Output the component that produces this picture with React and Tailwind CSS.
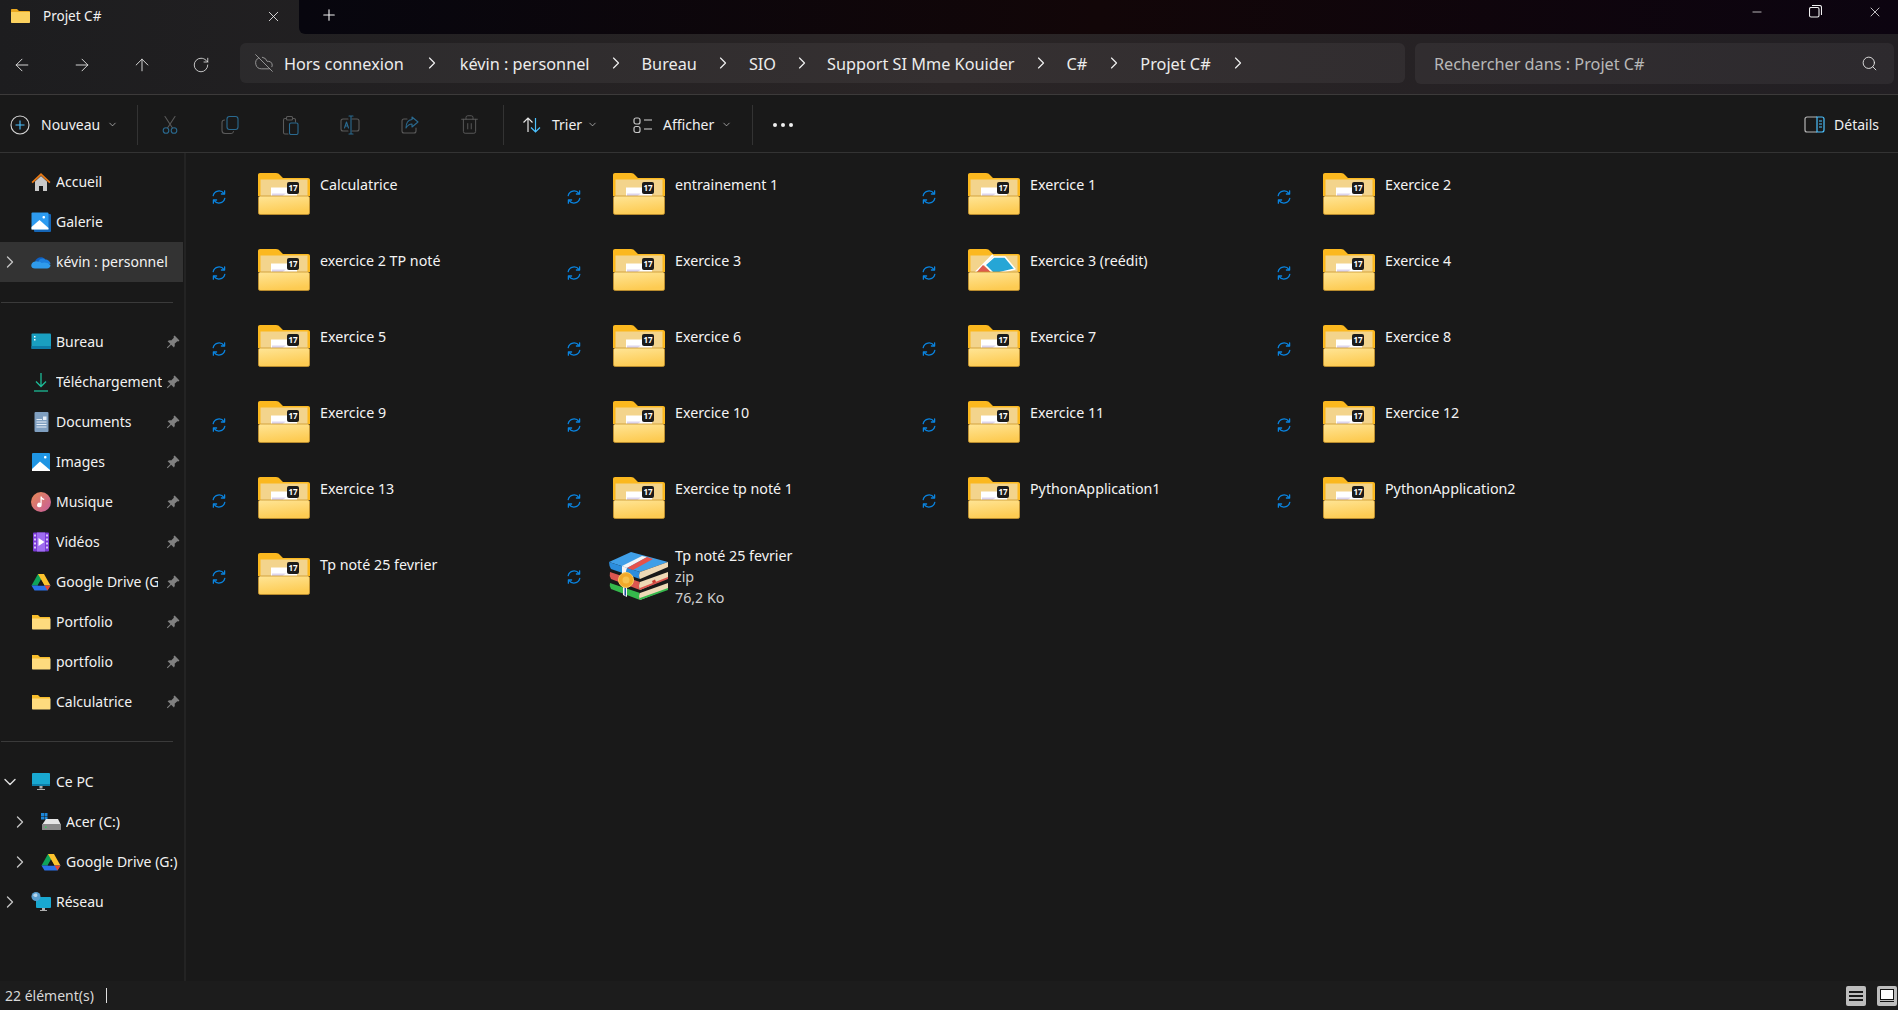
import React from "react";
import { ChevronRight, ChevronDown, ArrowLeft, ArrowRight, ArrowUp, RotateCw, CloudOff, Search, X, Plus, Minus, Trash2 } from "lucide-react";

const Font = '"Noto Sans", sans-serif';

function Sync() {
  return (
    <svg width="16" height="16" viewBox="0 0 16 16" fill="none" stroke="#0a84e0" strokeWidth="1.300" strokeLinecap="round" strokeLinejoin="round">
      <path d="M2.200 6.600A6 6 0 0 1 13 4.600" />
      <path d="M13.600 1.800v3.200h-3.200" />
      <path d="M13.800 9.400A6 6 0 0 1 3 11.400" />
      <path d="M2.400 14.200V11h3.200" />
    </svg>
  );
}

function FolderBase({ children, id }) {
  return (
    <svg width="52" height="42" viewBox="0 0 52 42" className="shrink-0">
      <defs>
        <linearGradient id={id} x1="0" y1="0" x2="0.300" y2="1">
          <stop offset="0" stopColor="#ffe596" />
          <stop offset="1" stopColor="#fdcb52" />
        </linearGradient>
      </defs>
      <path d="M2 0h16c2 0 3 .7 4 2l3 3h25c1.200 0 2 .8 2 2v16H0V2c0-1.200.8-2 2-2z" fill="#fbb81f" />
      <rect x="2.500" y="6.500" width="47" height="18" fill="#f3d48c" />
      {children}
      <rect x="0.400" y="23" width="51.200" height="18.600" rx="2" fill={`url(#${id})`} stroke="#c9962c" strokeWidth="0.800" />
    </svg>
  );
}

function Folder17({ id }) {
  return (
    <FolderBase id={id}>
      <path d="M13 14.500H39V24H13z" fill="#fff" />
      <path d="M14 24h9l5-3.500H14z" fill="#ddd6ee" />
      <rect x="29" y="9" width="12" height="12" rx="2" fill="#1b1b1b" />
      <text x="35" y="18.200" textAnchor="middle" fontSize="8" fontWeight="700" fill="#fff" fontFamily={Font}>17</text>
    </FolderBase>
  );
}

function FolderApp({ id }) {
  return (
    <FolderBase id={id}>
      <path d="M6 25 L25 6" stroke="#fff" strokeWidth="2" fill="none" />
      <path d="M15 16 L7 25 H25z" fill="#de5a4e" />
      <path d="M17 16 L26 8 H37 L47 20 L26 25z" fill="#26a6d6" stroke="#fff" strokeWidth="1.500" strokeLinejoin="round" />
    </FolderBase>
  );
}

function Books() {
  return (
    <svg width="60" height="48" viewBox="0 0 60 48" className="shrink-0">
      <path d="M1 31 L31 41 Q29 44 31 48 L2 37 Q0 34 1 31z" fill="#35b84c" />
      <path d="M31 41 L59 31 V37 L31 48 Q29 44 31 41z" fill="#eed9b6" />
      <path d="M31 46 L59 36 V38 L31 48z" fill="#35b84c" />
      <path d="M1 20 L31 30 Q29 34 31 38 L2 27 Q0 24 1 20z" fill="#dc5650" />
      <path d="M31 30 L59 20 V26 L31 38 Q29 34 31 30z" fill="#eed9b6" />
      <path d="M31 36 L59 25 V27 L31 38z" fill="#dc5650" />
      <path d="M0 10 L22 0 L59 10 L31 20z" fill="#3f9fe8" />
      <path d="M0 10 L31 20 Q29 24 31 27 L2 17 Q0 14 0 10z" fill="#2b8ddd" />
      <path d="M31 20 L59 10 V15 L31 27 Q29 24 31 20z" fill="#eed9b6" />
      <path d="M13 14 L33 4 L38 5 L18 16z" fill="#f4f4f4" />
      <path d="M18 16 L38 5 L44 7 L24 18z" fill="#e5524a" />
      <path d="M13 14 L18 16 Q16 20 18 24 L13 22z" fill="#f4f4f4" />
      <path d="M14 33 L18 35 L18 45 L14 43z" fill="#f4f4f4" />
      <path d="M15.500 34 L17 35 L17 44 L15.500 43z" fill="#1d4e9e" />
      <circle cx="17" cy="28" r="7.500" fill="#f1a92b" stroke="#f8cb62" strokeWidth="1" />
      <circle cx="17" cy="28" r="3.500" fill="#f7c34f" />
      <path d="M43 29l3-1.500 1 2.500-3 1.500z" fill="#c83a30" />
    </svg>
  );
}

const Pin = () => (
  <svg width="14" height="14" viewBox="0 0 13 13" className="shrink-0" fill="#808080">
    <path d="M8 .5 12.500 5 11.500 6 10.500 5.700 8 8.200c.4 1.300.2 2.300-.6 3.300L4.800 9 1.500 12.300.8 11.600 4.100 8.300 1.500 5.700c1-.8 2-1 3.300-.6L7.300 2.600 7 1.500z" />
  </svg>
);

const FolderSmall = () => (
  <svg width="20" height="20" viewBox="0 0 20 20">
    <path d="M1 3h6l2 2h9.500c.5 0 .5.500.5.500V8H1z" fill="#f8bd2a" />
    <path d="M1 6.500h18.500v10.300c0 .4-.3.700-.7.700H1.700c-.4 0-.7-.3-.7-.7z" fill="#fedb7e" />
  </svg>
);

const Home = () => (
  <svg width="20" height="20" viewBox="0 0 20 20">
    <path d="M4 9.500 10 4l6 5.500V19H12v-5H8v5H4z" fill="#c9c9c9" />
    <path d="M.5 10 10 1l9.500 9-1.200 1.300L10 3.500 1.700 11.300z" fill="#e87a16" />
  </svg>
);
const Gallery = () => (
  <svg width="20" height="20" viewBox="0 0 20 20">
    <rect x="3" y="2" width="17" height="18" rx="1" fill="#1565b5" />
    <rect x="0.500" y="0.500" width="17" height="17" rx="1" fill="#2d9bf0" />
    <path d="M0.500 17.500V15L8.500 8l9 8v1.500z" fill="#fff" />
    <rect x="11.500" y="4" width="2.500" height="2.500" rx="1" fill="#fff" />
  </svg>
);
const OneDrive = () => (
  <svg width="20" height="20" viewBox="0 0 20 20">
    <path d="M4 9.500c1-4 7-6 10-2.500-2 0-5 .5-6 2.500z" fill="#0f5fc0" />
    <path d="M7.500 9c2-3 5-3 7-1.500 2 0 5 2 5 4.500H8z" fill="#1c7fde" />
    <path d="M4 9.500c-5 1-5 7 0 7h12c2 0 3.500-1.500 3.500-3.500-3-3-7-3-9-2-1-1-3-2-6.500-1.500z" fill="#2f9bec" />
  </svg>
);
const Desktop = () => (
  <svg width="20" height="20" viewBox="0 0 20 20">
    <rect x="0.500" y="1.500" width="19.500" height="15.500" rx="1" fill="#1a9fc0" />
    <path d="M0.500 14H20v3H.5z" fill="#0e7ca8" />
    <rect x="3" y="4" width="1.500" height="1.500" fill="#fff" />
    <rect x="3" y="7" width="1.500" height="1.500" fill="#fff" />
  </svg>
);
const Download = () => (
  <svg width="20" height="20" viewBox="0 0 20 20" fill="none" stroke="#1dbb97" strokeWidth="1.300">
    <path d="M10 1v13M5 9.500l5 5 5-5" />
    <path d="M3 19h14" />
  </svg>
);
const Docs = () => (
  <svg width="20" height="20" viewBox="0 0 20 20">
    <rect x="3.500" y="0" width="14" height="20" rx="1" fill="#7f9fc0" />
    <path d="M5.500 7H11v1H5.500zM5.500 9.500h10v1h-10zM5.500 12h10v1h-10zM5.500 14.500h10v1h-10zM12 4.500h3.500V8H12z" fill="#e6eef7" />
  </svg>
);
const Images = () => (
  <svg width="20" height="20" viewBox="0 0 20 20">
    <rect x="1" y="1" width="18" height="18" rx="1" fill="#1f95e3" />
    <path d="M1 19v-2L9 9.500l10 8.500v1z" fill="#fff" />
    <rect x="13" y="4" width="2.500" height="2.500" rx="1" fill="#fff" />
  </svg>
);
const Music = () => (
  <svg width="20" height="20" viewBox="0 0 20 20">
    <defs>
      <linearGradient id="mg" x1="0" y1="0" x2="1" y2="1">
        <stop offset="0" stopColor="#e88a55" />
        <stop offset="1" stopColor="#c55c9c" />
      </linearGradient>
    </defs>
    <circle cx="10" cy="10" r="10" fill="url(#mg)" />
    <path d="M9.500 4.500h1.200c.3 1.500 1.300 2 2.500 2.200v1.300c-1 0-1.800-.3-2.500-.8v5.800a2.300 2.300 0 1 1-1.200-2z" fill="#fff" />
  </svg>
);
const Video = () => (
  <svg width="20" height="20" viewBox="0 0 20 20">
    <rect x="2" y="0.500" width="16" height="19" rx="1" fill="#7a3bd6" />
    <path d="M6 0.500h8v19H6z" fill="#9f6cf0" />
    <path d="M7.500 6v8l6-4z" fill="#fff" />
    <path d="M3 2.500h2v2H3zM3 6.500h2v2H3zM3 10.500h2v2H3zM3 14.500h2v2H3zM15 2.500h2v2h-2zM15 6.500h2v2h-2zM15 10.500h2v2h-2zM15 14.500h2v2h-2z" fill="#d9c5fa" />
  </svg>
);
const GDrive = () => (
  <svg width="20" height="20" viewBox="0 0 20 20">
    <path d="M7 2h6l-6.500 11.500h-6z" fill="#0fa35a" />
    <path d="M7 2h6l6.500 11.500h-6z" fill="#fcc22d" />
    <path d="M0.500 13.500h19L16.500 18.500h-13z" fill="#2a70e8" />
    <path d="M13.500 13.500h6L16.500 18.500z" fill="#e8442f" />
    <path d="M6.800 13.500 10 8.200l3.200 5.300z" fill="#191919" />
  </svg>
);
const Monitor = () => (
  <svg width="20" height="20" viewBox="0 0 20 20">
    <rect x="1" y="1" width="18" height="13" rx="1" fill="#19a8d0" />
    <path d="M1 12h18v2H1z" fill="#0e7ea8" />
    <path d="M8.500 14h3v2.500h-3zM6 17h8v1H6z" fill="#b0b0b0" />
  </svg>
);
const Drive = () => (
  <svg width="20" height="20" viewBox="0 0 20 20">
    <path d="M0 1h3v3H0zM3.500 1h3v3h-3zM0 4.500h3v3H0zM3.500 4.500h3v3h-3z" fill="#1c86d8" />
    <path d="M3 10l2-3h12l3 6H1z" fill="#e6e6e6" />
    <rect x="1" y="12" width="19" height="6" rx=".5" fill="#8a8a8a" />
    <rect x="4" y="14.500" width="1.500" height="1.500" fill="#35d05a" />
  </svg>
);
const Network = () => (
  <svg width="20" height="20" viewBox="0 0 20 20">
    <rect x="5" y="5" width="15" height="11" rx="1" fill="#19a8d0" />
    <path d="M11 16h3v2h-3zM9 18h7v1H9z" fill="#b0b0b0" />
    <circle cx="5" cy="4.500" r="4.500" fill="#5a9fd0" />
    <path d="M2 3c1-1 3-2 4-1s0 3-1 3-2 0-3-2z" fill="#b9d6ec" />
  </svg>
);

function NavItem({ icon, label, pin, chevron, indent, selected, clip }) {
  return (
    <div className={`h-10 w-[183px] flex items-center shrink-0 text-[14px] text-[#f2f2f2] ${selected ? "bg-[#333333]" : ""}`}>
      <span className={`${indent ? "w-[41px] pl-[10px]" : "w-[31px]"} shrink-0 flex`}>
        {chevron === "right" && <ChevronRight size={20} strokeWidth={1.600} color="#c4c4c4" />}
        {chevron === "down" && <ChevronDown size={20} strokeWidth={1.700} color="#dcdcdc" />}
      </span>
      <span className="w-[25px] shrink-0 flex">{icon}</span>
      <span className={`${pin ? (clip ? "w-[102px] mr-[8px]" : "w-[106px] mr-[4px]") : ""} overflow-hidden whitespace-nowrap leading-none py-1`}>{label}</span>
      {pin && <Pin />}
    </div>
  );
}

const Sep = () => <span className="w-px h-10 bg-[#333333] shrink-0" />;

const Crumb = ({ label, w }) => (
  <span className="flex items-center">
    <span className="whitespace-nowrap pt-[2px]">{label}</span>
    <span className={`flex justify-center ${w}`}>
      <ChevronRight size={20} strokeWidth={1.400} color="#f0f0f0" />
    </span>
  </span>
);

function DimIcon({ children }) {
  return (
    <span className="w-[60px] flex justify-center shrink-0">
      <svg width="20" height="20" viewBox="0 0 20 20" fill="none" strokeWidth="1.100" strokeLinecap="round" strokeLinejoin="round">
        {children}
      </svg>
    </span>
  );
}

const G = "#5a5a5a";
const B = "#2a6a90";

const items = [
  ["Calculatrice"], ["entrainement 1"], ["Exercice 1"], ["Exercice 2"],
  ["exercice 2 TP noté"], ["Exercice 3"], ["Exercice 3 (reédit)", "app"], ["Exercice 4"],
  ["Exercice 5"], ["Exercice 6"], ["Exercice 7"], ["Exercice 8"],
  ["Exercice 9"], ["Exercice 10"], ["Exercice 11"], ["Exercice 12"],
  ["Exercice 13"], ["Exercice tp noté 1"], ["PythonApplication1"], ["PythonApplication2"],
  ["Tp noté 25 fevrier"], ["Tp noté 25 fevrier", "zip"],
];

function Item({ label, kind, id }) {
  return (
    <div className="h-[76px] flex items-start">
      <span className="w-[52px] h-[54px] flex items-center pl-[5px] shrink-0">
        <span className="flex"><Sync /></span>
      </span>
      {kind === "zip" ? (
        <span className="-ml-[4px] mr-[6px] flex mt-[2px]"><Books /></span>
      ) : (
        <span className="flex mt-[3px]">{kind === "app" ? <FolderApp id={id} /> : <Folder17 id={id} />}</span>
      )}
      {kind === "zip" ? (
        <div className="text-[14.250px] leading-[21px] text-[#f4f4f4] -mt-[5px] whitespace-nowrap">
          <div>{label}</div>
          <div className="text-[#cfcfcf]">zip</div>
          <div className="text-[#cfcfcf]">76,2 Ko</div>
        </div>
      ) : (
        <div className="ml-[10px] text-[14.250px] leading-[21px] text-[#f4f4f4] mt-[4px] whitespace-nowrap">{label}</div>
      )}
    </div>
  );
}

export default function App() {
  return (
    <div className="w-[1898px] h-[1010px] overflow-hidden bg-[#191919] flex flex-col" style={{ fontFamily: Font }}>
      <div className="bg-gradient-to-r from-[#1d1d1f] via-[#2a2526] to-[#221f23]">
        <div className="h-[34px] flex text-[#f2f2f2]">
          <div className="w-[299px] flex items-center shrink-0 pl-[11px] pb-[2px]">
            <svg width="19" height="14" viewBox="0 0 19 14" className="shrink-0">
              <path d="M0 1c0-.6.4-1 1-1h5l2 2h10c.6 0 1 .4 1 1v3H0z" fill="#eaa820" />
              <path d="M0 3h19v10c0 .6-.4 1-1 1H1c-.6 0-1-.4-1-1z" fill="#fbd15f" />
            </svg>
            <span className="ml-[13px] text-[13.500px] w-[222px]">Projet C#</span>
            <X size={17} strokeWidth={1.200} color="#f0f0f0" />
          </div>
          <div className="flex-1 flex items-center justify-between rounded-bl-[6px] bg-gradient-to-r from-[#07060e] via-[#120608] to-[#0c0410] pl-[21px] pb-[4px]">
            <Plus size={18} strokeWidth={1.500} color="#f0f0f0" />
            <div className="flex items-center gap-[45px] pr-[15px] pb-[7px]">
              <Minus size={14} strokeWidth={1.200} color="#ffffff" />
              <svg width="13" height="13" viewBox="0 0 13 13" fill="none" stroke="#f0f0f0" strokeWidth="1.100">
                <rect x="0.500" y="2.500" width="9.500" height="9.500" rx="1.500" />
                <path d="M3 .5h7.500a2 2 0 0 1 2 2V10" />
              </svg>
              <X size={16} strokeWidth={1.100} color="#ffffff" />
            </div>
          </div>
        </div>
        <div className="h-[61px] flex items-center border-b border-[#3c3a3a]">
          <div className="w-[240px] shrink-0 flex items-center text-[#e4e4e4] pl-[12px] gap-[40px] pt-[1px]">
            <ArrowLeft size={20} strokeWidth={1.100} />
            <ArrowRight size={20} strokeWidth={1.100} />
            <ArrowUp size={20} strokeWidth={1.100} />
            <RotateCw size={18} strokeWidth={1.100} />
          </div>
          <div className="w-[1165px] h-[40px] mb-[2px] shrink-0 rounded-[6px] bg-white/[0.05] flex items-center pl-[14px] text-[16.250px] text-[#ececec]">
            <CloudOff size={20} strokeWidth={1} color="#a8a8a8" className="mr-[10px]" />
            <Crumb label="Hors connexion" w="w-[56px]" />
            <Crumb label="kévin : personnel" w="w-[52px]" />
            <Crumb label="Bureau" w="w-[52px]" />
            <Crumb label="SIO" w="w-[51px]" />
            <Crumb label="Support SI Mme Kouider" w="w-[52px]" />
            <Crumb label="C#" w="w-[53px]" />
            <Crumb label="Projet C#" w="w-[54px]" />
          </div>
          <div className="ml-[10px] w-[479px] h-[41px] mb-[1px] shrink-0 rounded-[6px] bg-white/[0.05] flex items-center justify-between pl-[19px] pr-[16px] text-[16.250px] text-[#b8b8b8]">
            <span className="pt-[2px]">Rechercher dans : Projet C#</span>
            <Search size={17} strokeWidth={1.300} color="#e6e6e6" />
          </div>
        </div>
      </div>

      <div className="h-[58px] flex items-center shrink-0 border-b border-[#333333] pt-[2px] text-[14px] text-[#f0f0f0]">
        <span className="ml-[10px] w-[20px] flex">
          <svg width="20" height="20" viewBox="0 0 20 20" fill="none">
            <circle cx="10" cy="10" r="9" stroke="#d4d4d4" strokeWidth="1.100" />
            <path d="M10 5.500v9M5.500 10h9" stroke="#4cc2ff" strokeWidth="1.100" />
          </svg>
        </span>
        <span className="ml-[11px] w-[66px]">Nouveau</span>
        <ChevronDown size={11} strokeWidth={1.400} color="#dcdcdc" />
        <span className="w-[19px]" />
        <Sep />
        <span className="w-[2px]" />
        <DimIcon>
          <path d="M5 1.500 12.500 13M15 1.500 7.500 13" stroke={G} />
          <circle cx="6" cy="15.500" r="2.800" stroke={B} />
          <circle cx="14" cy="15.500" r="2.800" stroke={B} />
        </DimIcon>
        <DimIcon>
          <rect x="7" y="1.500" width="11" height="13" rx="2.500" stroke={B} />
          <path d="M4.500 5a2.500 2.500 0 0 0-2.500 2.500v8a3 3 0 0 0 3 3h6a2.500 2.500 0 0 0 2.500-2" stroke={G} />
        </DimIcon>
        <DimIcon>
          <path d="M6.500 3.500H5A1.500 1.500 0 0 0 3.500 5v12.500A1.500 1.500 0 0 0 5 19h3M12.500 3.500H14A1.500 1.500 0 0 1 15.500 5v2" stroke={G} />
          <rect x="6.500" y="1.500" width="6" height="3.500" rx="1" stroke={G} />
          <rect x="9.500" y="8" width="8.500" height="11.500" rx="1.500" stroke={B} />
        </DimIcon>
        <DimIcon>
          <path d="M8 4H3a2 2 0 0 0-2 2v8a2 2 0 0 0 2 2h5M12 4h5a2 2 0 0 1 2 2v8a2 2 0 0 1-2 2h-5" stroke={G} />
          <path d="M11 1v18M9 1h4M9 19h4" stroke={B} />
          <path d="M4.500 13 6.500 7l2 6M5.200 11h2.600" stroke={B} />
        </DimIcon>
        <DimIcon>
          <path d="M7 4H4a2 2 0 0 0-2 2v10a2 2 0 0 0 2 2h10a2 2 0 0 0 2-2v-3" stroke={G} />
          <path d="M12 2l6 5-6 5V9C9 9 7.500 10.500 6 13c0-5 2-8 6-8.500z" stroke={B} />
        </DimIcon>
        <span className="w-[58px] flex justify-center shrink-0">
          <Trash2 size={21} strokeWidth={1.100} color={G} />
        </span>
        <span className="w-[5px]" />
        <Sep />
        <span className="ml-[18px] w-[20px] flex">
          <svg width="20" height="20" viewBox="0 0 20 20" fill="none" strokeWidth="1.200">
            <path d="M6 17V3M1.500 7.500 6 3l4.500 4.500" stroke="#e6e6e6" />
            <path d="M13.500 3v14M9 12.500l4.500 4.500 4.500-4.500" stroke="#4cc2ff" />
          </svg>
        </span>
        <span className="ml-[10px] w-[35px]">Trier</span>
        <ChevronDown size={11} strokeWidth={1.400} color="#dcdcdc" />
        <span className="ml-[35px] w-[20px] flex">
          <svg width="20" height="20" viewBox="0 0 20 20" fill="none" strokeWidth="1.200">
            <rect x="1" y="3" width="6" height="6" rx="2" stroke="#c8c8c8" />
            <rect x="1" y="11.500" width="6" height="6" rx="2" stroke="#c8c8c8" />
            <path d="M11 5h8M11 14h8" stroke="#d8d8d8" />
          </svg>
        </span>
        <span className="ml-[10px] w-[58px]">Afficher</span>
        <ChevronDown size={11} strokeWidth={1.400} color="#dcdcdc" />
        <span className="w-[20px]" />
        <Sep />
        <span className="ml-[20px] flex gap-[4px]">
          <span className="w-[4px] h-[4px] rounded-full bg-[#f0f0f0]" />
          <span className="w-[4px] h-[4px] rounded-full bg-[#f0f0f0]" />
          <span className="w-[4px] h-[4px] rounded-full bg-[#f0f0f0]" />
        </span>
        <span className="flex-1" />
        <svg width="21" height="17" viewBox="0 0 21 17" fill="none" className="shrink-0">
          <path d="M13 1H3a2 2 0 0 0-2 2v11a2 2 0 0 0 2 2h10" stroke="#b5b5b5" strokeWidth="1.200" />
          <path d="M13 1h5a2 2 0 0 1 2 2v11a2 2 0 0 1-2 2h-5z" stroke="#4cc2ff" strokeWidth="1.200" />
          <path d="M15 5h3M15 8h3M15 11h3" stroke="#4cc2ff" strokeWidth="1" />
        </svg>
        <span className="ml-[9px] mr-[19px]">Détails</span>
      </div>

      <div className="flex-1 flex min-h-0">
        <aside className="w-[186px] shrink-0 border-r-2 border-[#232323] pt-[9px] flex flex-col">
          <NavItem icon={<Home />} label="Accueil" />
          <NavItem icon={<Gallery />} label="Galerie" />
          <NavItem icon={<OneDrive />} label="kévin : personnel" chevron="right" selected />
          <div className="h-px w-[172px] ml-[1px] bg-[#3a3a3a] mt-[20px] mb-[19px]" />
          <NavItem icon={<Desktop />} label="Bureau" pin />
          <NavItem icon={<Download />} label="Téléchargement" pin />
          <NavItem icon={<Docs />} label="Documents" pin />
          <NavItem icon={<Images />} label="Images" pin />
          <NavItem icon={<Music />} label="Musique" pin />
          <NavItem icon={<Video />} label="Vidéos" pin />
          <NavItem icon={<GDrive />} label="Google Drive (G:)" pin clip />
          <NavItem icon={<FolderSmall />} label="Portfolio" pin />
          <NavItem icon={<FolderSmall />} label="portfolio" pin />
          <NavItem icon={<FolderSmall />} label="Calculatrice" pin />
          <div className="h-px w-[172px] ml-[1px] bg-[#3a3a3a] mt-[19px] mb-[20px]" />
          <NavItem icon={<Monitor />} label="Ce PC" chevron="down" />
          <NavItem icon={<Drive />} label="Acer (C:)" chevron="right" indent />
          <NavItem icon={<GDrive />} label="Google Drive (G:)" chevron="right" indent />
          <NavItem icon={<Network />} label="Réseau" chevron="right" />
        </aside>
        <main className="flex-1 pl-[20px] pt-[17px]">
          <div className="grid grid-cols-[355px_355px_355px_355px]">
            {items.map(([label, kind], i) => (
              <Item key={i} id={`fg${i}`} label={label} kind={kind} />
            ))}
          </div>
        </main>
      </div>

      <div className="h-[29px] shrink-0 bg-[#1c1c1c] flex items-center pl-[5px] pr-[1px] text-[14px] text-[#d8d8d8]">
        <span>22 élément(s)</span>
        <span className="ml-[12px] w-px h-[15px] bg-[#e0e0e0]" />
        <span className="flex-1" />
        <span className="w-[20px] h-[20px] bg-[#bdbdbd] rounded-[2px] flex flex-col justify-center gap-[2px] px-[3px]">
          <span className="h-[2px] bg-[#1a1a1a]" />
          <span className="h-[2px] bg-[#1a1a1a]" />
          <span className="h-[2px] bg-[#1a1a1a]" />
        </span>
        <span className="ml-[11px] w-[20px] h-[20px] bg-[#bdbdbd] rounded-[2px] flex flex-col items-center justify-center gap-[1px]">
          <span className="w-[14px] h-[11px] bg-white border border-[#111]" />
          <span className="w-[14px] h-[1px] bg-[#111]" />
        </span>
      </div>
    </div>
  );
}
